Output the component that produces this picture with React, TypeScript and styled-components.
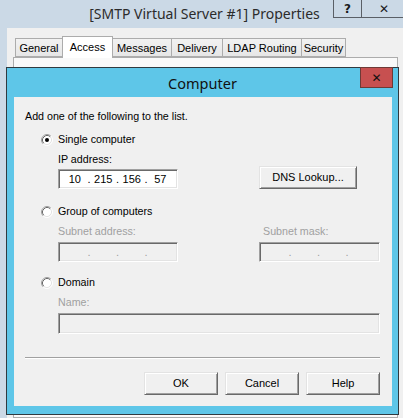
import styled, { createGlobalStyle } from 'styled-components';

const GlobalStyle = createGlobalStyle`
  html, body {
    margin: 0;
    padding: 0;
    background: #cbd9e6;
  }
  * {
    box-sizing: border-box;
  }
`;

// tabs share their side borders, so each width counts one extra pixel
const tabs = [
  { label: 'General', width: 48 },
  { label: 'Access', width: 51, active: true },
  { label: 'Messages', width: 60 },
  { label: 'Delivery', width: 52 },
  { label: 'LDAP Routing', width: 80 },
  { label: 'Security', width: 45 },
];

const Radio = ({ checked }: { checked?: boolean }) => (
  <RadioMark width="12" height="12" viewBox="0 0 12 12">
    <circle cx="6" cy="6" r="5" fill="#fff" />
    <path d="M2.11 9.89 A5.5 5.5 0 0 1 9.89 2.11" stroke="#a0a0a0" fill="none" />
    <path d="M9.89 2.11 A5.5 5.5 0 0 1 2.11 9.89" stroke="#ffffff" fill="none" />
    <path d="M2.82 9.18 A4.5 4.5 0 0 1 9.18 2.82" stroke="#696969" fill="none" />
    <path d="M9.18 2.82 A4.5 4.5 0 0 1 2.82 9.18" stroke="#e3e3e3" fill="none" />
    {checked && <circle cx="6" cy="6" r="2" fill="#000" />}
  </RadioMark>
);

const IpBox = ({ octets, width, disabled }: { octets?: string[]; width: number; disabled?: boolean }) => {
  const parts = octets ?? ['', '', '', ''];
  return (
    <Sunken $width={width} $height={20} $disabled={disabled}>
      {parts.map((p, i) => (
        <IpPart key={i}>
          <Octet>{p}</Octet>
          {i < 3 && <IpDot $disabled={disabled}>.</IpDot>}
        </IpPart>
      ))}
    </Sunken>
  );
};

const App = () => {
  return (
    <Desktop>
      <GlobalStyle />
      <TitleBar>
        <WindowTitle>[SMTP Virtual Server #1] Properties</WindowTitle>
        <CaptionButtons>
          <CaptionButton $width={28}>?</CaptionButton>
          <CaptionButton $width={45}>✕</CaptionButton>
        </CaptionButtons>
      </TitleBar>

      <ParentClient>
        <TabStrip>
          {tabs.map((t) => (
            <Tab key={t.label} $width={t.width} $active={t.active}>
              {t.label}
            </Tab>
          ))}
        </TabStrip>
        <TabPage />
      </ParentClient>

      <Dialog>
        <DialogTitleBar>
          <DialogTitle>Computer</DialogTitle>
          <CloseButton>✕</CloseButton>
        </DialogTitleBar>

        <DialogBody>
          <Intro>Add one of the following to the list.</Intro>

          <RadioRow $top={10}>
            <Radio checked />
            Single computer
          </RadioRow>
          <FieldLabel $top={7} $indent={33}>IP address:</FieldLabel>
          <FieldRow $top={0}>
            <IpBox width={120} octets={['10', '215', '156', '57']} />
            <PushButton $width={98}>DNS Lookup...</PushButton>
          </FieldRow>

          <RadioRow $top={16}>
            <Radio />
            Group of computers
          </RadioRow>
          <FieldRow $top={7}>
            <FieldColumn $width={120}>
              <FieldLabel $disabled>Subnet address:</FieldLabel>
              <IpBox width={120} disabled />
            </FieldColumn>
            <FieldColumn $width={121}>
              <FieldLabel $disabled $indent={4}>Subnet mask:</FieldLabel>
              <IpBox width={121} disabled />
            </FieldColumn>
          </FieldRow>

          <RadioRow $top={14}>
            <Radio />
            Domain
          </RadioRow>
          <FieldRow $top={7}>
            <FieldColumn $width={322}>
              <FieldLabel $disabled>Name:</FieldLabel>
              <Sunken $width={322} $height={21} $disabled />
            </FieldColumn>
          </FieldRow>

          <Separator />

          <ButtonBar>
            <PushButton $width={74}>OK</PushButton>
            <PushButton $width={74}>Cancel</PushButton>
            <PushButton $width={74}>Help</PushButton>
          </ButtonBar>
        </DialogBody>
      </Dialog>
    </Desktop>
  );
};

export default App;

const Desktop = styled.div`
  position: relative;
  width: 403px;
  height: 418px;
  overflow: hidden;
  display: flex;
  flex-direction: column;
  background: #cbd9e6;
  font-family: 'Liberation Sans', Arial, sans-serif;
  font-size: 10.7px;
  color: #000;
`;

/* parent property sheet */
const TitleBar = styled.div`
  display: grid;
  height: 28px;
  flex-shrink: 0;
  & > * {
    grid-area: 1 / 1;
  }
`;

const WindowTitle = styled.div`
  justify-self: center;
  align-self: start;
  margin-top: 4px;
  padding-left: 6px;
  font-family: 'Noto Sans', 'Open Sans', sans-serif;
  font-size: 14px;
  line-height: 20px;
  color: #2b2b2b;
  white-space: nowrap;
`;

const CaptionButtons = styled.div`
  justify-self: end;
  align-self: start;
  display: flex;
  margin-right: -3px;
`;

const CaptionButton = styled.div<{ $width: number }>`
  width: ${(p) => p.$width}px;
  height: 18px;
  display: flex;
  align-items: center;
  justify-content: center;
  border-left: 1px solid #5a5f66;
  border-bottom: 1px solid #5a5f66;
  font-family: 'DejaVu Sans', sans-serif;
  font-weight: bold;
  font-size: 12px;
  color: #1a1a1a;
`;

const ParentClient = styled.div`
  flex: 1;
  margin-left: 7px;
  display: flex;
  flex-direction: column;
  padding-top: 8px;
  background: #f0f0f0;
`;

const TabStrip = styled.div`
  display: flex;
  align-items: flex-end;
  height: 21px;
  padding-left: 9px;
  flex-shrink: 0;
  font-size: 11px;
`;

const Tab = styled.div<{ $width: number; $active?: boolean }>`
  position: relative;
  z-index: ${(p) => (p.$active ? 1 : 0)};
  width: ${(p) => p.$width}px;
  height: ${(p) => (p.$active ? 22 : 19)}px;
  margin-bottom: ${(p) => (p.$active ? -1 : 0)}px;
  margin-left: -1px;
  display: flex;
  align-items: ${(p) => (p.$active ? 'flex-start' : 'center')};
  justify-content: center;
  padding-top: ${(p) => (p.$active ? 4 : 1)}px;
  border: 1px solid #acacac;
  border-bottom: ${(p) => (p.$active ? 'none' : '1px solid #acacac')};
  background: ${(p) => (p.$active ? '#ffffff' : 'linear-gradient(#f2f2f2, #e6e6e6)')};
  white-space: nowrap;
`;

const TabPage = styled.div`
  flex: 1;
  margin-left: 6px;
  width: 385px;
  border: 1px solid #acacac;
  background: #f9f9f9;
`;

/* modal dialog window */
const Dialog = styled.div`
  position: absolute;
  left: 6px;
  top: 67px;
  width: 393px;
  height: 348px;
  display: flex;
  flex-direction: column;
  border: 1px solid #2f3a40;
  background: #5ec6e8;
`;

const DialogTitleBar = styled.div`
  display: grid;
  height: 29px;
  flex-shrink: 0;
  & > * {
    grid-area: 1 / 1;
  }
`;

const DialogTitle = styled.div`
  justify-self: center;
  align-self: center;
  font-family: 'Noto Sans', 'Open Sans', sans-serif;
  font-size: 14.5px;
  color: #111;
`;

const CloseButton = styled.div`
  justify-self: end;
  align-self: start;
  margin-top: -1px;
  margin-right: 5px;
  width: 33px;
  height: 21px;
  display: flex;
  align-items: center;
  justify-content: center;
  background: #c75050;
  border: 1px solid #6e3a36;
  font-family: 'DejaVu Sans', sans-serif;
  font-weight: bold;
  font-size: 12px;
  color: #111;
`;

const DialogBody = styled.div`
  flex: 1;
  margin: 0 6px 8px 7px;
  padding: 13px 12px 0 11px;
  display: flex;
  flex-direction: column;
  background: #f0f0f0;
  line-height: 13px;
`;

const Intro = styled.div`
  height: 13px;
`;

const RadioRow = styled.div<{ $top: number }>`
  display: flex;
  align-items: center;
  gap: 5px;
  height: 13px;
  margin-top: ${(p) => p.$top}px;
  margin-left: 16px;
`;

const RadioMark = styled.svg`
  flex-shrink: 0;
  display: block;
`;

const FieldLabel = styled.div<{ $top?: number; $disabled?: boolean; $indent?: number }>`
  height: 13px;
  margin-top: ${(p) => p.$top ?? 0}px;
  padding-left: ${(p) => p.$indent ?? 0}px;
  color: ${(p) => (p.$disabled ? '#a0a0a0' : '#000')};
`;

const FieldRow = styled.div<{ $top: number }>`
  display: flex;
  align-items: flex-end;
  gap: 81px;
  margin-top: ${(p) => p.$top}px;
  padding-left: 33px;
`;

const FieldColumn = styled.div<{ $width: number }>`
  display: flex;
  flex-direction: column;
  gap: 4px;
  width: ${(p) => p.$width}px;
`;

const Sunken = styled.div<{ $width: number; $height: number; $disabled?: boolean }>`
  display: flex;
  align-items: center;
  width: ${(p) => p.$width}px;
  height: ${(p) => p.$height}px;
  padding-left: 4px;
  border: 1px solid;
  border-color: #a0a0a0 #ffffff #ffffff #a0a0a0;
  box-shadow: inset 1px 1px 0 #696969, inset -1px -1px 0 #e3e3e3;
  background: ${(p) => (p.$disabled ? '#f0f0f0' : '#ffffff')};
  font-size: 11px;
`;

const IpPart = styled.div`
  display: flex;
`;

const Octet = styled.span`
  width: 23.5px;
  text-align: center;
`;

const IpDot = styled.span<{ $disabled?: boolean }>`
  width: 5px;
  text-align: center;
  color: ${(p) => (p.$disabled ? '#a0a0a0' : '#000')};
`;

const PushButton = styled.div<{ $width: number }>`
  width: ${(p) => p.$width}px;
  height: 23px;
  display: flex;
  align-items: center;
  justify-content: center;
  border: 1px solid;
  border-color: #e3e3e3 #696969 #696969 #e3e3e3;
  box-shadow: inset 1px 1px 0 #ffffff, inset -1px -1px 0 #a0a0a0;
  background: #f0f0f0;
  font-size: 11px;
`;

const Separator = styled.div`
  margin-top: 23px;
  height: 2px;
  border-top: 1px solid #a0a0a0;
  border-bottom: 1px solid #ffffff;
`;

const ButtonBar = styled.div`
  display: flex;
  justify-content: flex-end;
  gap: 7px;
  margin-top: 13px;
`;
